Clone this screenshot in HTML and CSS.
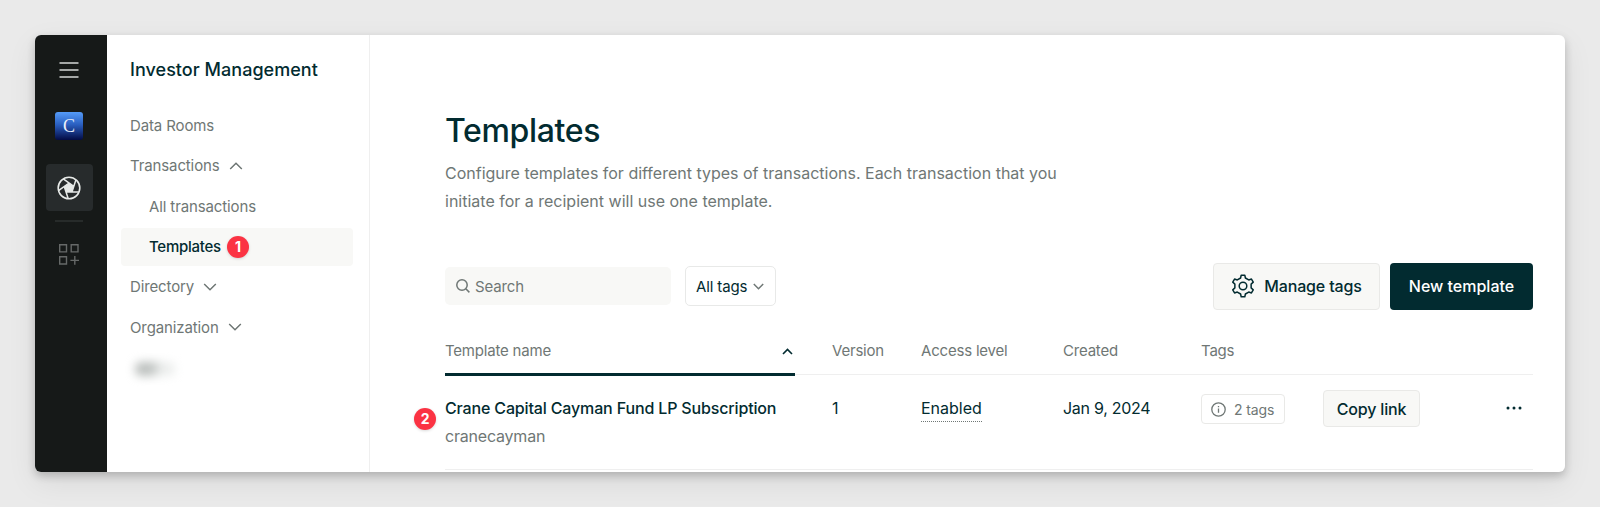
FILE: index.html
```html
<!DOCTYPE html>
<html lang="en">
<head>
    <meta charset="UTF-8">
    <meta name="viewport" content="width=device-width, initial-scale=1.0">
    <title>Templates</title>
    <link rel="stylesheet" href="styles.css">
</head>
<body>
    <div class="window">
        <nav class="rail">
            <svg class="rail-menu" width="20" height="18" viewBox="0 0 20 18">
                <path d="M0.5 2h19M0.5 9h19M0.5 16h19" stroke="#d5d8d6" stroke-width="1.6"/>
            </svg>
            <div class="logo">C</div>
            <div class="rail-active">
                <svg width="24" height="24" viewBox="-12 -12 24 24" stroke="#e6e9e7">
                    <circle r="10.8" fill="none" stroke-width="1.6"/>
                    <path d="M0-5L4.76-1.55 2.94 4.05H-2.94L-4.76-1.55z" fill="#e6e9e7" stroke="none"/>
                    <path d="M-2.94 4.05H10M-4.76-1.55L-.76 10.76M0-5L-10.47 2.6M4.76-1.55L-5.71-9.15M2.94 4.05L6.94-8.26" fill="none" stroke-width="1.5"/>
                </svg>
            </div>
            <div class="rail-divider"></div>
            <svg class="rail-apps" width="20" height="21" viewBox="0 0 20 21">
                <path d="M.7.7h6.8v7.2H.7zM12.2.7H19v7.2h-6.8zM.7 12.8h6.8V20H.7zM15.8 12v8.8M11.4 16.4h8.6" fill="none" stroke="#666968" stroke-width="1.4"/>
            </svg>
        </nav>

        <aside class="sidebar">
            <h2>Investor Management</h2>
            <ul class="menu">
                <li>Data Rooms</li>
                <li>Transactions
                    <svg class="chevron" width="14" height="8" viewBox="0 0 14 8"><path d="M1.2 7L7 1.2 12.8 7"/></svg>
                </li>
                <li class="sub">All transactions</li>
                <li class="sub active">Templates<b class="badge">1</b></li>
                <li>Directory
                    <svg class="chevron" width="14" height="8" viewBox="0 0 14 8"><path d="M1.2 1L7 6.8 12.8 1"/></svg>
                </li>
                <li>Organization
                    <svg class="chevron" width="14" height="8" viewBox="0 0 14 8"><path d="M1.2 1L7 6.8 12.8 1"/></svg>
                </li>
                <li><i class="redacted"></i></li>
            </ul>
        </aside>

        <main class="content">
            <h1>Templates</h1>
            <p class="intro">Configure templates for different types of transactions. Each transaction that you initiate for a recipient will use one template.</p>

            <div class="toolbar">
                <div class="search">
                    <svg width="14" height="14" viewBox="0 0 14 14"><circle cx="6" cy="6" r="5.2"/><path d="M9.8 9.8l3.6 3.6"/></svg>
                    <span>Search</span>
                </div>
                <div class="filter">
                    <span>All tags</span>
                    <svg class="chevron" width="11" height="7" viewBox="0 0 11 7"><path d="M.8 1L5.5 5.7 10.2 1"/></svg>
                </div>
                <button class="btn manage">
                    <svg width="24" height="24" viewBox="-12 -12 24 24"><circle r="3.8"/><path d="M-2.4-8L-1.8-10.8H1.8L2.4-8 5.73-6.08 8.45-6.96 10.25-3.84 8.13-1.92V1.92L10.25 3.84 8.45 6.96 5.73 6.08 2.4 8 1.8 10.8H-1.8L-2.4 8-5.73 6.08-8.45 6.96-10.25 3.84-8.13 1.92V-1.92L-10.25-3.84-8.45-6.96-5.73-6.08z"/></svg>
                    <span>Manage tags</span>
                </button>
                <button class="btn primary">New template</button>
            </div>

            <div class="table">
                <div class="row head">
                    <div class="sorted">Template name
                        <svg class="chevron" width="11" height="7" viewBox="0 0 11 7"><path d="M1 6L5.5 1.4 10 6"/></svg>
                    </div>
                    <div>Version</div>
                    <div>Access level</div>
                    <div>Created</div>
                    <div>Tags</div>
                </div>
                <div class="row item">
                    <b class="badge marker">2</b>
                    <div class="name"><strong>Crane Capital Cayman Fund LP Subscription</strong><small>cranecayman</small></div>
                    <div>1</div>
                    <div><span class="access">Enabled</span></div>
                    <div class="date">Jan 9, 2024</div>
                    <div class="chip">
                        <svg width="15" height="15" viewBox="0 0 15 15"><circle cx="7.5" cy="7.5" r="6.7"/><path d="M7.5 6.6v4.2M7.5 4v1.3"/></svg>
                        <span>2 tags</span>
                    </div>
                    <button class="btn copy">Copy link</button>
                    <svg class="more" width="16" height="4" viewBox="0 0 16 4"><circle cx="2" cy="2" r="1.5"/><circle cx="8" cy="2" r="1.5"/><circle cx="14" cy="2" r="1.5"/></svg>
                </div>
            </div>
        </main>
    </div>
</body>
</html>
```
FILE: styles.css
```css
* {
    box-sizing: border-box;
}

body {
    margin: 0;
    padding: 35px;
    height: 507px;
    overflow: hidden;
    background: #eaeaea;
    font-family: Inter, "Liberation Sans", sans-serif;
    font-size: 15px;
    letter-spacing: -0.12px;
    color: #022b30;
}

.window {
    display: flex;
    height: 437px;
    background: #fff;
    border-radius: 6px;
    overflow: hidden;
    box-shadow: 0 4px 8px rgba(0, 0, 0, 0.2), 0 10px 30px rgba(0, 0, 0, 0.08);
}

.rail {
    width: 72px;
    display: flex;
    flex-direction: column;
    align-items: center;
    background: #161918;
    padding: 26px 4px 0 0;
}

.logo {
    width: 28px;
    height: 28px;
    margin-top: 33px;
    border-radius: 3px;
    background: linear-gradient(#559bf8, #2a5fc0 45%, #030b45);
    color: #e8eefa;
    font: 18px/28px "Liberation Serif", serif;
    text-align: center;
}

.rail-active {
    display: flex;
    align-items: center;
    justify-content: center;
    width: 47px;
    height: 47px;
    margin-top: 24px;
    border-radius: 4px;
    background: #272b2c;
}

.rail-divider {
    width: 28px;
    height: 2px;
    margin: 9px 0 22px;
    background: #272b2a;
}

.sidebar {
    width: 263px;
    padding: 24px 16px 0 14px;
    border-right: 1px solid #efefef;
}

h2 {
    margin: 0 0 0 9px;
    font-size: 18px;
    font-weight: 500;
    line-height: 22px;
    letter-spacing: 0.03px;
    white-space: nowrap;
}

.menu {
    list-style: none;
    margin: 25.4px 0 0;
    padding: 0;
}

.menu li {
    display: flex;
    align-items: center;
    height: 38px;
    margin-bottom: 2.4px;
    padding-left: 9px;
    border-radius: 4px;
    color: #6f7775;
}

.menu .sub {
    padding-left: 28px;
}

.menu .active {
    background: #f8f8f6;
    color: #022b30;
    font-weight: 500;
    letter-spacing: -0.25px;
}

.chevron {
    fill: none;
    stroke: #6f7775;
    stroke-width: 1.5;
}

.menu .chevron {
    margin-left: 9px;
}

.badge {
    width: 22px;
    height: 22px;
    border-radius: 50%;
    background: #fb3343;
    box-shadow: 0 1px 3px rgba(0, 0, 0, 0.15);
    color: #fff;
    font-size: 14px;
    font-weight: 700;
    line-height: 22px;
    text-align: center;
}

.menu .badge {
    margin-left: 6px;
}

.redacted {
    width: 40px;
    height: 14px;
    margin: 2px 0 0 5px;
    background: linear-gradient(100deg, #bcc0be 40%, #eceeed 65%);
    border-radius: 6px;
    filter: blur(5px);
}

.content {
    flex: 1;
    padding: 76px 32px 0 75px;
}

h1 {
    margin: 0;
    font-size: 32px;
    font-weight: 500;
    line-height: 40px;
    letter-spacing: -0.35px;
}

.intro {
    width: 640px;
    margin: 9px 0 0;
    font-size: 16px;
    line-height: 27.7px;
    letter-spacing: 0;
    color: #6f7775;
}

.toolbar {
    display: flex;
    align-items: center;
    height: 48px;
    margin-top: 47px;
}

.search {
    display: flex;
    align-items: center;
    width: 226px;
    height: 38px;
    padding-left: 11px;
    border-radius: 5px;
    background: #f8f8f6;
    color: #6f7775;
}

.search svg {
    margin-right: 5px;
    fill: none;
    stroke: #6f7775;
    stroke-width: 1.5;
}

.filter {
    display: flex;
    align-items: center;
    justify-content: space-between;
    width: 91px;
    height: 40px;
    margin-left: 14px;
    padding: 0 11px 0 10px;
    border: 1px solid #e8e9e8;
    border-radius: 5px;
}

.btn {
    display: flex;
    align-items: center;
    justify-content: center;
    padding: 0;
    border: 1px solid #e9e9e7;
    border-radius: 4px;
    background: #f8f8f6;
    font: 500 16px Inter, "Liberation Sans", sans-serif;
    letter-spacing: -0.15px;
    color: #022b30;
}

.manage {
    width: 167px;
    height: 47px;
    margin: 0 10px 0 auto;
}

.manage svg {
    margin-right: 9px;
    fill: none;
    stroke: #022b30;
    stroke-width: 1.5;
    stroke-linejoin: round;
}

.primary {
    width: 143px;
    height: 47px;
    border: 0;
    background: #022b30;
    color: #fff;
    letter-spacing: 0;
}

.row {
    display: grid;
    grid-template-columns: 387px 89px 142px 138px 122px 1fr auto;
    border-bottom: 1px solid #efefef;
}

.head {
    height: 65px;
    line-height: 20px;
    padding-top: 31px;
    letter-spacing: -0.2px;
    color: #6f7775;
}

.sorted {
    display: flex;
    justify-content: space-between;
    align-items: center;
    width: 350px;
    height: 35px;
    padding: 0 2px 12px 0;
    border-bottom: 3px solid #022b30;
}

.sorted .chevron {
    stroke: #022b30;
    stroke-width: 1.6;
}

.item {
    position: relative;
    height: 95px;
    padding-top: 20px;
    font-size: 16px;
    line-height: 27.5px;
}

.marker {
    position: absolute;
    left: -31px;
    top: 33px;
}

.name strong,
.name small {
    display: block;
    font-size: 16px;
    font-weight: 500;
    letter-spacing: -0.15px;
}

.name small {
    font-weight: 400;
    letter-spacing: -0.2px;
    color: #6f7775;
}

.access {
    display: inline-block;
    height: 27px;
    border-bottom: 1px dotted #6f7775;
    letter-spacing: 0;
}

.date {
    letter-spacing: -0.27px;
}

.chip {
    display: flex;
    align-items: center;
    width: 84px;
    height: 30px;
    margin-top: -1px;
    padding-left: 9px;
    border: 1px solid #e9e9e7;
    border-radius: 4px;
    font-size: 14px;
    color: #6f7775;
}

.chip svg {
    margin-right: 8px;
    fill: none;
    stroke: #6f7775;
    stroke-width: 1.3;
}

.copy {
    width: 97px;
    height: 37px;
    margin-top: -5px;
}

.more {
    margin: 11px 11px 0 0;
    fill: #022b30;
}
```
